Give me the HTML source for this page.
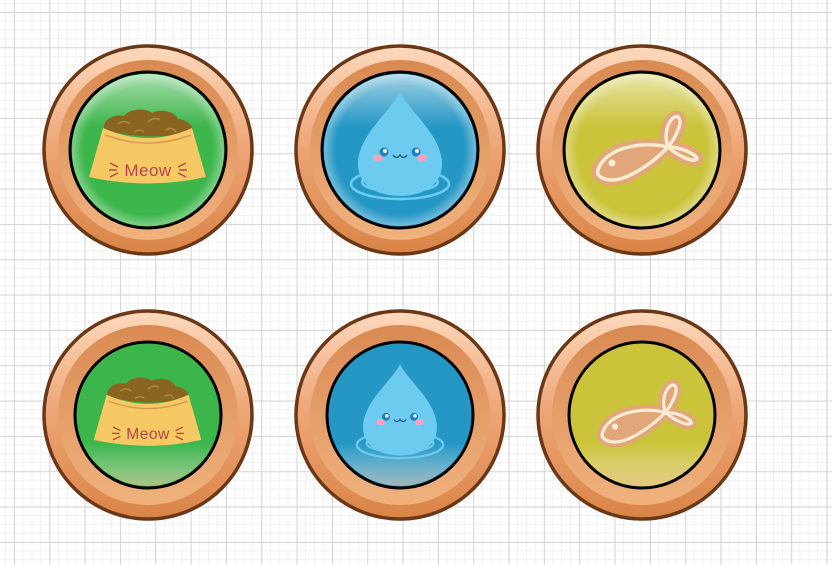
<!DOCTYPE html>
<html><head><meta charset="utf-8"><style>
html,body{margin:0;padding:0;width:832px;height:565px;overflow:hidden;background:#fff;}
body{background-image:
linear-gradient(#d6d6d6 1px,transparent 1px),
linear-gradient(90deg,#d6d6d6 1px,transparent 1px),
linear-gradient(#f0f0f0 1px,transparent 1px),
linear-gradient(90deg,#f0f0f0 1px,transparent 1px);
background-size:35.33px 35.33px,35.33px 35.33px,8.83px 8.83px,8.83px 8.83px;
background-position:0 12px,14px 0,0 3px,5px 0;}
svg{position:absolute;left:0;top:0}
</style></head><body>
<svg width="832" height="565" viewBox="0 0 832 565" xmlns="http://www.w3.org/2000/svg">
<defs>
<linearGradient id="rim" x1="0" y1="0" x2="0" y2="1"><stop offset="0" stop-color="#fdd9bd"/><stop offset="0.5" stop-color="#eda474"/><stop offset="1" stop-color="#d98447"/></linearGradient>
<linearGradient id="bev" x1="0" y1="0" x2="0" y2="1"><stop offset="0" stop-color="#d98a52"/><stop offset="1" stop-color="#f0b27e"/></linearGradient>
<radialGradient id="gloss" cx="0.5" cy="0.5" r="0.5"><stop offset="0.85" stop-color="#fff" stop-opacity="0"/><stop offset="1" stop-color="#fff" stop-opacity="0.35"/></radialGradient>
<linearGradient id="topg" x1="0" y1="0" x2="0" y2="1"><stop offset="0" stop-color="#fff" stop-opacity="0.55"/><stop offset="0.35" stop-color="#fff" stop-opacity="0"/></linearGradient>
<linearGradient id="botg" x1="0" y1="0" x2="0" y2="1"><stop offset="0.7" stop-color="#fff" stop-opacity="0"/><stop offset="1" stop-color="#f5c9b0" stop-opacity="0.6"/></linearGradient>
<g id="bowl">
 <path d="M-44,-20 C-46,-32 -32,-36 -24,-34 C-18,-42 -2,-42 4,-37 C12,-42 28,-38 30,-31 C40,-30 46,-24 44,-18 Q0,-8 -44,-20 Z" fill="#8a6522"/>
 <path d="M-30,-26 q6,-5 12,0 M0,-28 q6,-6 12,-2 M-14,-18 q6,-4 10,0 M18,-20 q6,-4 10,2" stroke="#b08a3a" stroke-width="1.5" fill="none"/>
 <path d="M-45,-22 Q0,-2 44,-22 L58,27 Q0,40 -59,27 Z" fill="#f6c965"/>
 <path d="M-43,-15 Q0,1 43,-15" stroke="#d89a55" stroke-width="1.5" fill="none"/>
 <text x="0" y="26" text-anchor="middle" font-family="Liberation Sans, sans-serif" font-size="17" fill="#b5474a" letter-spacing="0.5">Meow</text>
 <path d="M-38,13 l8,4 M-39,20 l8,0 M-38,27 l8,-4 M38,13 l-8,4 M39,20 l-8,0 M38,27 l-8,-4" stroke="#b5474a" stroke-width="1.5"/>
</g>
<g id="drop">
 <g fill="none" stroke="#6ecbf0" stroke-width="2.5">
  <ellipse cx="0" cy="34" rx="49" ry="15"/><ellipse cx="0" cy="32" rx="38" ry="10"/>
 </g>
 <path d="M0,-58 C8,-40 42,-15 42,14 C42,36 22,46 0,46 C-22,46 -42,36 -42,14 C-42,-15 -8,-40 0,-58 Z" fill="#6ecbf0"/>
 <circle cx="-16" cy="2" r="4.5" fill="#1c7fc7"/><circle cx="16" cy="2" r="4.5" fill="#1c7fc7"/>
 <circle cx="-15" cy="1" r="2" fill="#fff"/><circle cx="17" cy="1" r="2" fill="#fff"/>
 <ellipse cx="-22" cy="8" rx="5" ry="3.5" fill="#f7a3b8"/><ellipse cx="22" cy="8" rx="5" ry="3.5" fill="#f7a3b8"/>
 <path d="M-7,5 q3.5,5 7,0 q3.5,5 7,0" stroke="#1c5f8a" stroke-width="1.5" fill="none"/>
</g>
<g id="fish">
 <g stroke-linejoin="round" stroke-linecap="round">
 <g fill="#e1a77b" stroke="#e1a77b" stroke-width="12">
  <path d="M-44,20 C-38,0 -5,-10 26,-3 C10,14 -15,30 -30,30 C-40,30 -46,25 -44,20 Z"/>
  <path d="M26,-3 C20,-20 30,-36 36,-33 C42,-28 32,-10 26,-3 C40,-3 55,5 55,9 C50,13 35,5 26,-3 Z"/>
 </g>
 <g fill="none" stroke="#fcebd3" stroke-width="3.5">
  <path d="M-44,20 C-38,0 -5,-10 26,-3 C10,14 -15,30 -30,30 C-40,30 -46,25 -44,20 Z"/>
  <path d="M26,-3 C20,-20 30,-36 36,-33 C42,-28 32,-10 26,-3 C40,-3 55,5 55,9 C50,13 35,5 26,-3"/>
 </g>
 </g>
 <circle cx="-30" cy="13" r="3.5" fill="#fcebd3"/>
</g>
</defs>

<!-- ROW 1 -->
<g transform="translate(148,150)">
 <circle r="104" fill="url(#rim)" stroke="#6b3817" stroke-width="3.5"/>
 <circle r="90" fill="url(#bev)"/>
 <circle r="78" fill="#3cb54a" stroke="#000" stroke-width="3"/>
 <circle r="76" fill="url(#topg)"/><circle r="76" fill="url(#gloss)"/>
 <use href="#bowl"/>
</g>
<g transform="translate(400,150)">
 <circle r="104" fill="url(#rim)" stroke="#6b3817" stroke-width="3.5"/>
 <circle r="90" fill="url(#bev)"/>
 <circle r="78" fill="#2597c4" stroke="#000" stroke-width="3"/>
 <circle r="76" fill="url(#topg)"/><circle r="76" fill="url(#gloss)"/>
 <use href="#drop"/>
</g>
<g transform="translate(642,150)">
 <circle r="104" fill="url(#rim)" stroke="#6b3817" stroke-width="3.5"/>
 <circle r="90" fill="url(#bev)"/>
 <circle r="78" fill="#cbc33a" stroke="#000" stroke-width="3"/>
 <circle r="76" fill="url(#topg)"/><circle r="76" fill="url(#gloss)"/>
 <use href="#fish"/>
</g>

<!-- ROW 2 -->
<g transform="translate(148,415)">
 <circle r="104" fill="url(#rim)" stroke="#6b3817" stroke-width="3.5"/>
 <circle r="90" fill="url(#bev)"/>
 <circle r="73" fill="#3cb54a" stroke="#000" stroke-width="3"/>
 <circle r="71" fill="url(#botg)"/>
 <g transform="scale(0.92)"><use href="#bowl"/></g>
</g>
<g transform="translate(400,415)">
 <circle r="104" fill="url(#rim)" stroke="#6b3817" stroke-width="3.5"/>
 <circle r="90" fill="url(#bev)"/>
 <circle r="73" fill="#2597c4" stroke="#000" stroke-width="3"/>
 <circle r="71" fill="url(#botg)"/>
 <g transform="scale(0.88)"><use href="#drop"/></g>
</g>
<g transform="translate(642,415)">
 <circle r="104" fill="url(#rim)" stroke="#6b3817" stroke-width="3.5"/>
 <circle r="90" fill="url(#bev)"/>
 <circle r="73" fill="#cbc33a" stroke="#000" stroke-width="3"/>
 <circle r="71" fill="url(#botg)"/>
 <g transform="scale(0.9)"><use href="#fish"/></g>
</g>
</svg>
</body></html>
